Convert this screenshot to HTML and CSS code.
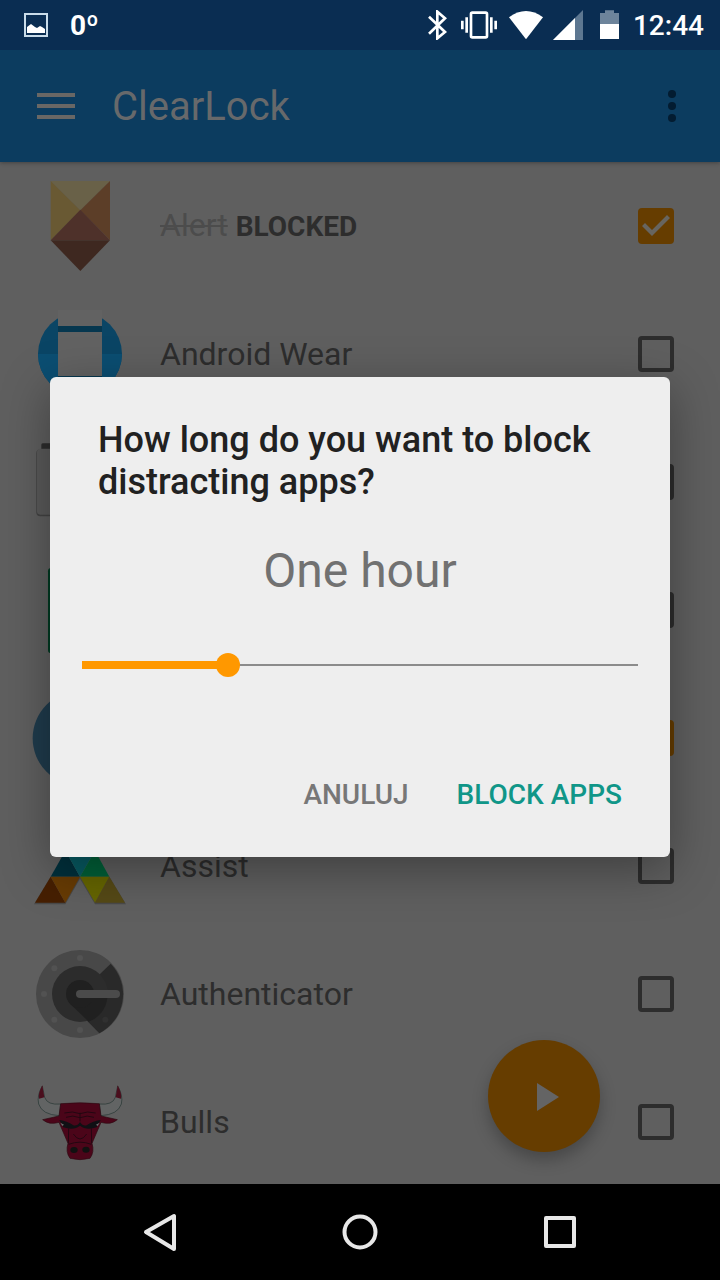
FILE: index.html
```html
<!DOCTYPE html>
<html lang="en">
<head>
<meta charset="utf-8">
<meta name="viewport" content="width=device-width, initial-scale=1">
<title>ClearLock</title>
<link rel="stylesheet" href="styles.css">
</head>
<body>
<header class="status">
  <div class="status-left">
    <svg width="24" height="24" viewBox="0 0 24 24"><rect x="1" y="1" width="22" height="22" fill="none" stroke="#c9dcea" stroke-width="2"/><path d="M3 20V14L7 11L11 14L13 15L16 13L18 14L21 16V20Z" fill="#fff"/></svg>
    <span class="temperature">0º</span>
  </div>
  <div class="status-right">
    <svg width="23" height="30" viewBox="84 30 69 90"><path d="M87 50L135 96L112 115V35L135 55L87 101" fill="none" stroke="#fff" stroke-width="8"/></svg>
    <svg width="38" height="30" viewBox="183 30 114 90"><rect x="213" y="38" width="48" height="74" rx="4" fill="none" stroke="#fff" stroke-width="8"/><path d="M200 52V98M274 52V98" stroke="#fff" stroke-width="8"/><path d="M187 62V88M287 62V88" stroke="#fff" stroke-width="8"/></svg>
    <svg width="34" height="30" viewBox="327 30 102 90"><path d="M327 52Q378 14 429 52L378 118Z" fill="#fff"/></svg>
    <svg width="30" height="30" viewBox="459 30 90 90"><path d="M459 120L549 30V120Z" fill="#5d7791"/><path d="M459 120L525 54V120Z" fill="#fff"/></svg>
    <svg width="30" height="30" viewBox="579 30 90 90"><path d="M600 39H615V31H642V39H657V72H600Z" fill="#6d849b"/><path d="M600 72H657V117H600Z" fill="#fff"/></svg>
    <time class="clock">12:44</time>
  </div>
</header>

<main class="screen">
  <div class="toolbar">
    <button class="icon-button" type="button" aria-label="Menu">
      <svg width="38" height="26" viewBox="0 0 38 26"><path d="M0 2H38M0 13H38M0 24H38" stroke="#696765" stroke-width="4"/></svg>
    </button>
    <h1 class="app-title">ClearLock</h1>
    <button class="icon-button" type="button" aria-label="More options">
      <svg width="8" height="32" viewBox="0 0 8 32" fill="#031c31"><circle cx="4" cy="4" r="4"/><circle cx="4" cy="16" r="4"/><circle cx="4" cy="28" r="4"/></svg>
    </button>
  </div>

  <ul class="apps">
    <li><label class="app">
      <svg class="app-icon" viewBox="36 39 288 288">
        <path d="M92 48H270L181 136Z" fill="#696148"/><path d="M92 48L181 136L92 226Z" fill="#695933"/><path d="M270 48V226L181 136Z" fill="#5c3e28"/><path d="M181 134L270 226H92Z" fill="#4e312a"/><path d="M92 226H270L181 318Z" fill="#3e2820"/>
      </svg>
      <span class="app-name"><s>Alert</s> <b>BLOCKED</b></span>
      <input class="check" type="checkbox" checked>
    </label></li>
    <li><label class="app">
      <svg class="app-icon" viewBox="36 423 288 288">
        <circle cx="180" cy="567" r="126" fill="#0a4565"/><path d="M54 567H306A126 126 0 0 1 54 567Z" fill="#0b4e72"/><path d="M114 450H246V690H114Z" fill="#06374f"/><path d="M114 434H246V483H114ZM114 501H246V633H114Z" fill="#626262"/>
      </svg>
      <span class="app-name">Android Wear</span>
      <input class="check" type="checkbox">
    </label></li>
    <li class="app">
      <svg class="app-icon" viewBox="36 42 288 288"><path d="M64 88V74Q64 70 70 70H290V88Z" fill="#2d2d2d"/><rect x="49" y="88" width="262" height="201" rx="12" fill="#434343"/><rect x="51" y="86" width="258" height="198" rx="10" fill="#5a5a5a"/></svg>
      <span class="app-name"></span>
      <input class="check" type="checkbox" aria-label="Block app">
    </li>
    <li class="app">
      <svg class="app-icon" viewBox="36 426 288 288"><rect x="84" y="444" width="192" height="256" rx="10" fill="#003a22"/></svg>
      <span class="app-name"></span>
      <input class="check" type="checkbox" aria-label="Block app">
    </li>
    <li class="app">
      <svg class="app-icon" viewBox="36 810 288 288"><circle cx="180" cy="955" r="142" fill="#1f3b4c"/></svg>
      <span class="app-name"></span>
      <input class="check" type="checkbox" aria-label="Block app" checked>
    </li>
    <li><label class="app">
      <svg class="app-icon" viewBox="36 -66 288 288">
        <path d="M42 193L92 110H268L318 193H225L180 116L136 193Z" fill="#494949"/>
        <path d="M180 -46L225 32H136Z" fill="#064460"/><path d="M136 32L180 110H92Z" fill="#01303c"/><path d="M136 32H225L180 110Z" fill="#075a62"/><path d="M225 32L268 110H180Z" fill="#006038"/>
        <path d="M92 110L136 188H45Z" fill="#461f02"/><path d="M92 110H180L136 188Z" fill="#673b04"/><path d="M180 110H268L225 188Z" fill="#656500"/><path d="M268 110L315 188H225Z" fill="#554916"/>
      </svg>
      <span class="app-name">Assist</span>
      <input class="check" type="checkbox">
    </label></li>
    <li><label class="app">
      <svg class="app-icon" viewBox="36 318 288 288">
        <circle cx="180" cy="462" r="132" fill="#484848"/><path d="M272 371A132 132 0 0 1 238 580L150 490L240 402Z" fill="#292929"/><circle cx="180" cy="462" r="84" fill="#2c2c2c"/><path d="M150 491L206 545A84 84 0 0 0 262 474L222 462Z" fill="#202020"/><circle cx="180" cy="462" r="42" fill="#202020"/><rect x="168" y="450" width="132" height="24" rx="12" fill="#4b4b4b"/>
        <g fill="#525252"><circle cx="180" cy="354" r="9"/><circle cx="103" cy="385" r="9"/><circle cx="72" cy="462" r="9"/><circle cx="103" cy="539" r="9"/><circle cx="180" cy="570" r="9"/></g><circle cx="256" cy="539" r="9" fill="#303030"/>
      </svg>
      <span class="app-name">Authenticator</span>
      <input class="check" type="checkbox">
    </label></li>
    <li><label class="app">
      <svg class="app-icon" viewBox="36 42 288 288">
        <path d="M67 78Q50 106 56 132Q66 164 118 167L122 132Q82 136 74 112ZM293 78Q310 106 304 132Q294 164 242 167L238 132Q278 136 286 112Z" fill="#626464" stroke="#243532" stroke-width="2"/>
        <path d="M67 76Q54 100 57 116L73 112ZM293 76Q306 100 303 116L287 112Z" fill="#4a0e1d"/>
        <path d="M122 131Q180 126 238 131L243 168L292 179Q272 196 243 187L216 250Q224 276 210 295Q180 303 150 295Q136 276 144 250L117 187Q88 196 68 179L117 168Z" fill="#4b0519" stroke="#2d0810" stroke-width="2"/>
        <path d="M133 159Q158 152 180 161Q202 152 227 159M138 172Q158 164 180 173Q202 164 222 172M180 158V184M146 205L145 250M214 205L215 250M160 222Q180 252 200 222M146 253Q180 240 214 253" fill="none" stroke="#230711" stroke-width="3"/>
        <path d="M118 180Q144 184 160 196Q172 199 180 186Q188 199 200 196Q216 184 242 180L230 202Q198 212 180 197Q162 212 130 202Z" fill="#101014"/>
        <path d="M121 188L132 194L127 198ZM239 188L228 194L233 198Z" fill="#707070"/>
        <ellipse cx="162" cy="270" rx="11" ry="9" fill="#111"/><ellipse cx="198" cy="269" rx="11" ry="9" fill="#111"/>
      </svg>
      <span class="app-name">Bulls</span>
      <input class="check" type="checkbox">
    </label></li>
  </ul>

  <button class="fab" type="button" aria-label="Start">
    <svg width="30" height="30" viewBox="0 0 30 30"><path d="M8 2L30 16L8 30Z" fill="#646464"/></svg>
  </button>

  <div class="overlay">
    <section class="dialog" role="dialog" aria-labelledby="question">
      <h2 class="question" id="question">How long do you want to block distracting apps?</h2>
      <label class="duration" for="duration">One hour</label>
      <input class="slider" id="duration" type="range" min="0" max="19" value="5">
      <div class="actions">
        <button class="action" type="button">ANULUJ</button>
        <button class="action action-primary" type="button">BLOCK APPS</button>
      </div>
    </section>
  </div>
</main>

<nav class="navbar">
  <button class="nav-button" type="button" aria-label="Back"><svg width="48" height="48" viewBox="0 0 48 48"><path d="M10 24L38 8V41Z"/></svg></button>
  <button class="nav-button" type="button" aria-label="Home"><svg width="48" height="48" viewBox="0 0 48 48"><circle cx="24" cy="24" r="15.5"/></svg></button>
  <button class="nav-button" type="button" aria-label="Recent apps"><svg width="48" height="48" viewBox="0 0 48 48"><rect x="10" y="10" width="28" height="28"/></svg></button>
</nav>
</body>
</html>
```

FILE: styles.css
```css
* { box-sizing: border-box; }

body {
  margin: 0;
  height: 100vh;
  display: flex;
  flex-direction: column;
  background: #5f5f5f;
  font-family: Roboto, "Noto Sans", sans-serif;
}

button {
  padding: 0;
  border: 0;
  background: none;
  font: inherit;
}

svg { display: block; flex: none; }

.status {
  display: flex;
  justify-content: space-between;
  height: 50px;
  padding: 0 16px 0 24px;
  background: #0a2d52;
  color: #fff;
}

.status-left,
.status-right {
  display: flex;
  align-items: center;
}

.status-left { gap: 22px; }
.status-right { gap: 10px; }

.temperature {
  font-size: 28px;
  font-weight: 700;
}

.clock {
  font-size: 28px;
  font-weight: 500;
}

.screen {
  position: relative;
  flex: 1 1 0;
  min-height: 0;
  overflow: hidden;
}

.toolbar {
  position: relative;
  display: flex;
  align-items: center;
  height: 112px;
  padding: 0 44px 0 37px;
  gap: 37px;
  background: #0c3c5f;
  box-shadow: 0 1px 4px rgba(0, 0, 0, .3);
}

.app-title {
  flex: 1;
  margin: 0;
  color: #67696b;
  font-size: 40px;
  font-weight: 400;
}

.apps {
  margin: 0;
  padding: 0;
  list-style: none;
}

.app {
  display: flex;
  align-items: center;
  gap: 32px;
  height: 128px;
  padding: 0 46px 0 32px;
}

.app-icon {
  width: 96px;
  height: 96px;
}

.app-name {
  flex: 1;
  color: #2d2d2d;
  font-size: 32px;
  line-height: 40px;
}

.app-name s { color: #4c4c4c; text-decoration-thickness: 2px; }
.app-name b { font-size: 28px; }

.check {
  appearance: none;
  flex: none;
  width: 36px;
  height: 36px;
  margin: 0;
  border: 4px solid #2d2d2d;
  border-radius: 4px;
}

.check:checked {
  border: 0;
  background: #663d00;
}

.check:checked::before {
  content: "";
  display: block;
  height: 100%;
  background: #676560;
  clip-path: polygon(4px 18px, 14px 28px, 32px 10px, 29px 7px, 14px 22px, 7px 15px);
}

.fab {
  position: absolute;
  right: 120px;
  bottom: 32px;
  display: grid;
  place-items: center;
  width: 112px;
  height: 112px;
  border-radius: 50%;
  background: #663d00;
  box-shadow: 0 8px 16px rgba(0, 0, 0, .25);
}

.overlay {
  position: absolute;
  inset: 0;
  display: flex;
  align-items: center;
  justify-content: center;
  padding: 0 50px;
}

.dialog {
  display: flex;
  flex-direction: column;
  width: 100%;
  padding: 42px 20px;
  border-radius: 6px;
  background: #eee;
  box-shadow: 0 12px 48px rgba(0, 0, 0, .35);
}

.question {
  margin: 0;
  padding: 0 28px;
  color: #212121;
  font-size: 36px;
  font-weight: 500;
  line-height: 42px;
}

.duration {
  margin-top: 40px;
  color: #717171;
  font-size: 48px;
  line-height: 56px;
  text-align: center;
}

.slider {
  appearance: none;
  width: 100%;
  height: 24px;
  margin: 54px 0 0;
  background:
    linear-gradient(#ff9800, #ff9800) 12px 50% / calc((100% - 24px) * 5 / 19) 8px no-repeat,
    linear-gradient(#8b8b8b, #8b8b8b) 12px 50% / calc(100% - 24px) 2px no-repeat;
}

.slider::-webkit-slider-thumb {
  appearance: none;
  width: 24px;
  height: 24px;
  border-radius: 50%;
  background: #ff9800;
}

.actions {
  display: flex;
  justify-content: flex-end;
  gap: 48px;
  margin-top: 98px;
  padding: 0 28px;
}

.action {
  color: #777;
  font-size: 28px;
  font-weight: 500;
  line-height: 40px;
}

.action-primary { color: #109688; }

.navbar {
  display: flex;
  height: 96px;
  padding: 0 60px;
  background: #000;
}

.nav-button {
  flex: 1;
  display: grid;
  place-items: center;
}

.nav-button svg {
  fill: none;
  stroke: #e8e8e8;
  stroke-width: 4;
  stroke-linejoin: round;
}
```
